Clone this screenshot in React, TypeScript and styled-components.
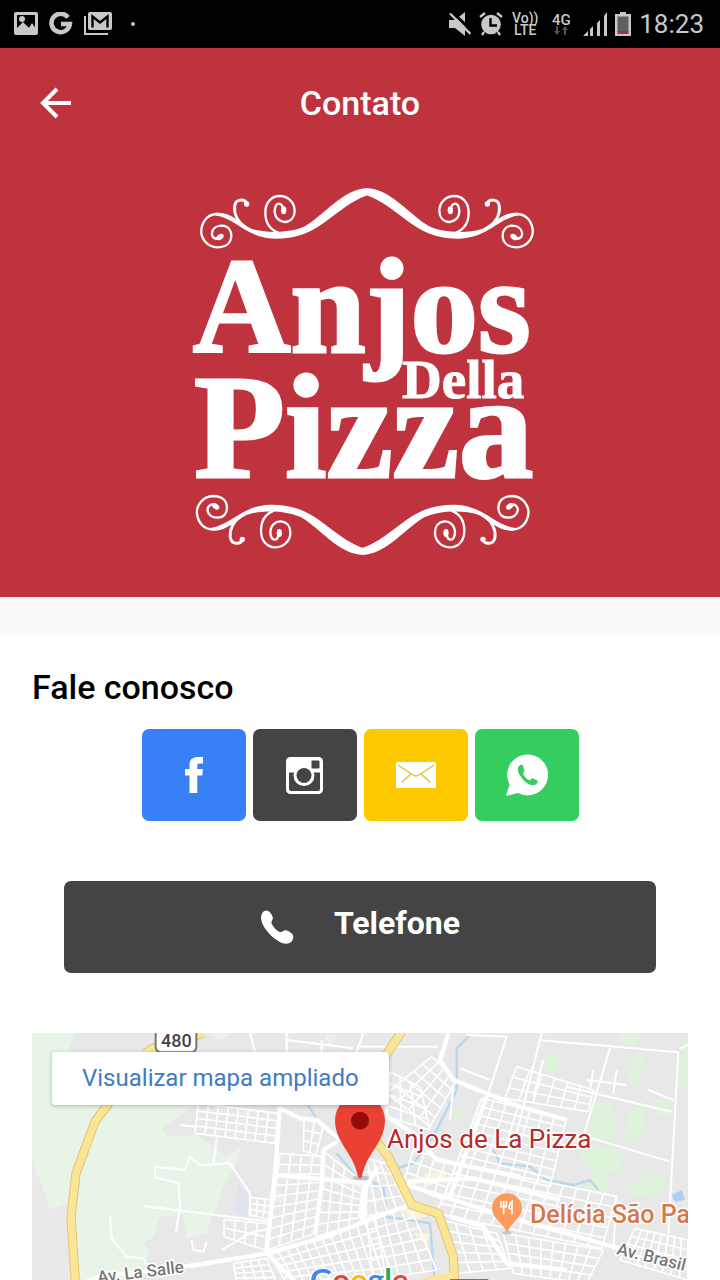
import React from "react";
import styled, { createGlobalStyle } from "styled-components";

const GlobalStyle = createGlobalStyle`
  * { box-sizing: border-box; }
  html, body, #root { margin: 0; height: 100%; }
  body { background: #fff; font-family: Roboto, "Liberation Sans", sans-serif; }
`;

const RED = "#bf333e";

const Page = styled.div`
  min-height: 100vh;
  display: flex;
  flex-direction: column;
`;

const StatusBar = styled.div`
  height: 48px;
  padding: 0 16px 0 14px;
  display: flex;
  align-items: center;
  justify-content: space-between;
  background: #000;
  color: #c8c8c8;
`;

const StatusGroup = styled.div<{ $gap: number }>`
  display: flex;
  align-items: center;
  gap: ${(p) => p.$gap}px;
  svg { display: block; }
`;

const StackedText = styled.span<{ $size: number }>`
  display: flex;
  flex-direction: column;
  align-items: center;
  width: 28px;
  font-size: ${(p) => p.$size}px;
  line-height: 12px;
  font-weight: 500;
`;

const Clock = styled.time`
  font-size: 26px;
  line-height: 32px;
`;

const Hero = styled.header`
  background: ${RED};
  color: #fff;
`;

const TopBar = styled.div`
  height: 110px;
  padding: 0 32px;
  display: grid;
  grid-template-columns: 48px 1fr 48px;
  align-items: center;
`;

const BackButton = styled.button`
  width: 48px;
  height: 48px;
  padding: 0;
  border: 0;
  background: none;
  color: inherit;
  display: grid;
  place-items: center;
`;

const Title = styled.h1`
  margin: 0;
  text-align: center;
  font-size: 34px;
  line-height: 40px;
  font-weight: 500;
`;

const LogoArea = styled.div`
  padding: 22px 0 37px;
  display: flex;
  justify-content: center;
  svg { display: block; }
`;

const Spacer = styled.div`
  height: 38px;
  background: #fafafa;
`;

const Content = styled.main`
  flex: 1;
  padding: 32px 32px 0;
  display: flex;
  flex-direction: column;
`;

const SectionTitle = styled.h2`
  margin: 0 0 22px;
  font-size: 34px;
  line-height: 40px;
  font-weight: 500;
  color: #000;
`;

const Socials = styled.nav`
  display: flex;
  justify-content: center;
  gap: 7px;
`;

const SocialLink = styled.a<{ $color: string }>`
  width: 104px;
  height: 92px;
  border-radius: 7px;
  background: ${(p) => p.$color};
  display: grid;
  place-items: center;
`;

const PhoneLink = styled.a`
  margin: 60px 32px;
  height: 92px;
  padding: 0 0 8px;
  border-radius: 7px;
  background: #444;
  color: #fff;
  display: flex;
  align-items: center;
  justify-content: center;
  gap: 40px;
  font-size: 32px;
  line-height: 40px;
  font-weight: 700;
  text-decoration: none;
  svg { margin-top: 8px; }
`;

const MapFrame = styled.section`
  position: relative;
  flex: 1 0 247px;
  overflow: hidden;
  background: #e8e8e8;
`;

const MapDrawing = styled.svg`
  position: absolute;
  inset: 0;
  width: 100%;
  height: 100%;
`;

const MapLink = styled.a`
  position: absolute;
  top: 19px;
  left: 20px;
  padding: 10px 30px 11px;
  border-radius: 4px;
  background: #fff;
  box-shadow: 0 1px 4px rgba(0, 0, 0, 0.25);
  color: #3f7cc0;
  font-size: 24px;
  line-height: 32px;
  text-decoration: none;
`;

/* ---------- status icons ---------- */

const PictureIcon = () => (
  <svg width="24" height="24" viewBox="0 0 24 24">
    <path fill="currentColor" fillRule="evenodd" d="M2 0h20q2 0 2 2v19q0 2-2 2H2q-2 0-2-2V2Q0 0 2 0ZM3 3v13l6-6 6 6 3-4 3 4V3Z" />
    <circle cx="8" cy="7" r="3" fill="currentColor" />
    <path fill="currentColor" d="M3 17l6-6 6 5 3-5 4 6v4H2Z" />
  </svg>
);

const GoogleIcon = () => (
  <svg width="24" height="24" viewBox="0 0 24 24" fill="none" stroke="currentColor" strokeWidth="4.6">
    <path d="M19 5.4A9.2 9.2 0 1 0 20.8 12H12" />
  </svg>
);

const MailStackIcon = () => (
  <svg width="28" height="24" viewBox="0 0 28 24">
    <path d="M1 4v18h23" fill="none" stroke="currentColor" strokeWidth="2" />
    <path fill="currentColor" d="M6 0h20q2 0 2 2v14q0 2-2 2H6q-2 0-2-2V2q0-2 2-2Z" />
    <path d="M8.500 15.500V4.500l7.500 6 7.500-6V15.500" fill="none" stroke="#000" strokeWidth="2.400" />
  </svg>
);

const MuteIcon = () => (
  <svg width="22" height="24" viewBox="0 0 22 24" fill="currentColor">
    <path d="M0 8h6l10-8v24l-10-8H0Z" />
    <path d="M2-1l22 21" stroke="#000" strokeWidth="3" />
    <path d="M1 1.500l20.500 20.500" stroke="currentColor" strokeWidth="2.400" />
  </svg>
);

const AlarmIcon = () => (
  <svg width="24" height="24" viewBox="0 0 24 24">
    <circle cx="12" cy="12.500" r="9.800" fill="currentColor" />
    <path d="M1 5l5-4M23 5l-5-4M5 20l-2 3M19 20l2 3" stroke="currentColor" strokeWidth="2.400" />
    <path d="M11.500 6v7.500H18" fill="none" stroke="#000" strokeWidth="2.400" />
  </svg>
);

const SignalIcon = () => (
  <svg width="24" height="24" viewBox="0 0 24 24" fill="currentColor">
    <path d="M0 24l5-5v5ZM7 17l3-3v10H7ZM14 11l3-3v16h-3ZM21 4l3-4v24h-3Z" />
  </svg>
);

const BatteryIcon = () => (
  <svg width="16" height="24" viewBox="0 0 16 24">
    <path d="M5 0h6v2h5v22H0V2h5Z" fill="currentColor" />
    <path d="M2.500 4.500h11V20h-11Z" fill="#5f5f5f" />
    <path d="M2.500 19h11v3h-11Z" fill="#a8343a" />
  </svg>
);

const DataArrows = () => (
  <svg width="14" height="9" viewBox="0 0 14 9" fill="#555">
    <path d="M2 0h2v5h2L3 9 0 5h2ZM10 9h2V4h2L11 0 8 4h2Z" />
  </svg>
);

/* ---------- logo ---------- */

const FlourishHalf = () => (
  <g>
    <g fill="none" stroke="#fff" strokeLinecap="round">
      <path strokeWidth="7" d="M122 202C104 214 94 198 96 188C98 174 112 167 126 167C144 168 154 180 154 198C153 220 136 232 112 232C81 231 61 204 64 178C68 148 88 131 114 132" />
      <path strokeWidth="9" d="M202 102C194 85 167 86 164 108C161 132 174 156 196 172" />
      <path strokeWidth="7" d="M310 122C308 96 286 92 284 122C284 144 300 157 316 156C334 154 344 140 344 122C344 96 322 78 300 78C272 78 256 100 256 128C256 156 270 178 294 188" />
    </g>
    <g fill="#fff">
      <ellipse cx="120" cy="201" rx="12" ry="8" transform="rotate(-35 120 201)" />
      <circle cx="200" cy="102" r="8" />
      <ellipse cx="311" cy="121" rx="8" ry="12" />
      <path d="M104 129C150 122 177 158 214 176C258 190 330 190 376 168C430 138 490 56 562 55V76C515 92 480 124 430 160C378 198 328 207 282 206C196 202 170 146 104 136Z" />
    </g>
  </g>
);

const Flourish = () => (
  <g>
    <FlourishHalf />
    <g transform="translate(1122 0) scale(-1 1)"><FlourishHalf /></g>
  </g>
);

const LogoWord = styled.text`
  font-family: "Liberation Serif", "Times New Roman", serif;
  font-weight: 700;
  fill: #fff;
  stroke: #fff;
`;

const Logo = () => (
  <svg width="360" height="380" viewBox="180 180 360 380" role="img" aria-label="Anjos Della Pizza">
    <g transform="translate(180 170) scale(0.33333)"><Flourish /></g>
    <LogoWord x="193" y="352" fontSize="135" strokeWidth="3">Anjos</LogoWord>
    <LogoWord x="402" y="398" fontSize="55" strokeWidth="1">Della</LogoWord>
    <LogoWord x="194" y="477" fontSize="149" strokeWidth="3">Pizza</LogoWord>
    <g transform="translate(175.667 573.333) scale(0.33333 -0.33333)"><Flourish /></g>
  </svg>
);

/* ---------- map ---------- */

type Pt = [number, number];

const mix = (a: Pt, b: Pt, t: number): Pt => [a[0] + (b[0] - a[0]) * t, a[1] + (b[1] - a[1]) * t];

/* Street blocks: evenly divided lines across a four-sided district. */
const Blocks = ({ q, cols, rows }: { q: [Pt, Pt, Pt, Pt]; cols: number; rows: number }) => {
  const [a, b, c, d] = q;
  let path = "";
  for (let i = 0; i <= cols; i++) {
    path += `M${mix(a, b, i / cols).join(" ")}L${mix(d, c, i / cols).join(" ")}`;
  }
  for (let i = 0; i <= rows; i++) {
    path += `M${mix(a, d, i / rows).join(" ")}L${mix(b, c, i / rows).join(" ")}`;
  }
  return <path d={path} />;
};

const districts: { q: [Pt, Pt, Pt, Pt]; cols: number; rows: number }[] = [
  { q: [[535, 250], [775, 280], [765, 370], [525, 340]], cols: 8, rows: 4 },
  { q: [[780, 400], [910, 410], [885, 640], [742, 690]], cols: 4, rows: 9 },
  { q: [[690, 532], [758, 540], [750, 600], [688, 585]], cols: 3, rows: 3 },
  { q: [[852, 300], [912, 310], [888, 405], [850, 392]], cols: 2, rows: 3 },
  { q: [[912, 395], [1035, 490], [1020, 610], [888, 650]], cols: 4, rows: 7 },
  { q: [[750, 705], [1060, 595], [1120, 780], [800, 790]], cols: 12, rows: 5 },
  { q: [[640, 730], [740, 715], [770, 790], [650, 790]], cols: 4, rows: 4 },
  { q: [[612, 598], [745, 612], [735, 690], [612, 650]], cols: 4, rows: 2 },
  { q: [[1235, 110], [1310, 180], [1230, 320], [1100, 220]], cols: 4, rows: 5 },
  { q: [[1110, 155], [1200, 200], [1230, 330], [1100, 290]], cols: 3, rows: 4 },
  { q: [[1490, 140], [1720, 210], [1705, 275], [1455, 235]], cols: 6, rows: 3 },
  { q: [[1385, 235], [1640, 295], [1590, 500], [1310, 430]], cols: 7, rows: 8 },
  { q: [[1310, 430], [1790, 530], [1745, 685], [1250, 580]], cols: 12, rows: 5 },
  { q: [[1265, 600], [1430, 640], [1470, 745], [1310, 760]], cols: 4, rows: 5 },
  { q: [[1450, 640], [1750, 690], [1700, 790], [1480, 760]], cols: 8, rows: 4 },
  { q: [[1040, 600], [1170, 560], [1250, 750], [1060, 780]], cols: 5, rows: 6 },
  { q: [[1845, 625], [2004, 660], [2004, 780], [1800, 720]], cols: 8, rows: 4 },
  { q: [[1180, 390], [1310, 430], [1270, 540], [1150, 490]], cols: 4, rows: 3 },
  { q: [[1020, 410], [1100, 430], [1160, 560], [1040, 590]], cols: 4, rows: 4 },
];

const MapArt = () => (
  <MapDrawing viewBox="32 1033 656 247" preserveAspectRatio="xMidYMin slice" aria-hidden="true">
    <g transform="translate(20 1020) scale(0.33333)">
      <rect x="36" y="39" width="1968" height="900" fill="#e8e8e8" />
      <path fill="#ebe9e7" d="M36 430L80 560 140 560 160 790H36Z" />
      <g fill="#e9f4e8">
        <path d="M36 39H165L140 110 400 110 530 250 480 285 425 330 445 350 530 345 620 410 665 375 650 430 610 500 590 560 570 600 560 640 500 655 490 585 420 590 400 650 370 670 390 700 350 790H175L140 550 90 570 70 510 36 420Z" />
        <path d="M915 45h40l-30 40ZM765 515l35 10-10 25-30-5ZM570 39h60l-30 25Z" />
      </g>
      <g fill="#dff2dc">
        <path d="M1580 105l40-5-10 50-40 10ZM1660 115l30-10-10 20-20 5ZM1800 39h60l-5 35-50-5ZM1840 100l40-10-30 100-30-10ZM1560 180l25-5-15 30ZM1990 80l14 0v120l-35 5ZM1910 235l50 5-5 45-50 5ZM1720 250l50-5 20 50-5 60-50 10-30-20ZM1830 260q50-10 45 60l-20 40-40-10ZM1700 370l110 30-10 50-40 10 10 65-70-10 20-70-50-25ZM1870 460l70 10-10 50-80 10-40-20Z" />
        <path d="M1295 260l30 10-20 40ZM1140 300l40-15 20 20-40 15Z" />
      </g>
      <path fill="#fcf4d8" d="M1210 465l70-15-5 30-60 20ZM1150 570l60-10 10 30-50 10ZM1180 640l50 0-10 35Z" />
      <path fill="#dfe5ea" d="M655 490L685 525 685 590 640 580Z" />
      <path fill="#a9d1f5" d="M1955 525l30-15 10 30-30 5Z" />
      <g fill="none" stroke="#b5d8ee" strokeWidth="7">
        <path d="M860 250L900 310 960 370M950 400L1010 470 1090 500 1100 590 1230 610 1245 790" />
        <path d="M1350 45L1310 85 1310 210 1240 350 1180 430 1130 445M1420 390L1440 430 1530 440 1580 480 1660 495 1710 480 1735 510" />
      </g>
      <g fill="none" stroke="#fff" strokeWidth="5" strokeLinejoin="round">
        {districts.map((d, i) => <Blocks key={i} {...d} />)}
      </g>
      <g fill="none" stroke="#fff" strokeWidth="6" strokeLinejoin="round">
        <path d="M370 558L750 605M405 475V440L495 450 510 410 540 435 630 430 690 520V590M405 472L475 490 480 560 468 635M580 430L590 355M480 315L530 320M270 590L275 655 320 710 370 715 385 740M515 660L520 690 550 695 560 665M605 690L690 640 750 625M690 39L705 95M800 60L1000 85M800 39V95M905 60V95M1020 80L1255 80M1010 95L1030 40" />
        <path d="M1340 45L1460 50 1400 235M1565 39L1490 340M1555 60L1975 97 1945 640M1770 85L1690 350M1980 85L2004 75M1640 200L1955 275M1700 350L1950 425M1790 525L1780 690M1320 145L1410 180M1300 200L1290 300M1570 120L1540 230M1720 150L1710 210M1790 150L1780 220M1700 180L1820 195M1885 210L1960 240" />
      </g>
      <g fill="none" stroke="#fff" strokeWidth="13" strokeLinejoin="round">
        <path d="M185 790L240 770 530 735 740 700 920 650 1060 595 1180 550M780 260L765 460 740 700M780 265L840 295 890 300 960 360 910 390 905 500 885 640M765 465L1050 490M740 700L830 790M1040 490L1030 600" />
        <path d="M1285 40L1260 120 1300 180 1500 260 1640 300M1400 230L1290 530M1160 485L1360 475 1620 540M1160 495L1460 590 1780 680 1850 700M1290 590L1390 620 1460 730 1640 750M1100 290L1180 340 1250 420 1500 470M1075 440L1030 510 1020 590" />
      </g>
      <g fill="none" strokeLinejoin="round">
        <path stroke="#dfc675" strokeWidth="28" d="M270 245L225 305 168 460 153 590 167 800M375 100L400 85 550 40M1145 35L1095 110M1070 365L1105 410 1175 555 1255 580 1300 710 1305 800" />
        <path stroke="#fbe697" strokeWidth="22" d="M270 245L225 305 168 460 153 590 167 800M375 100L400 85 550 40M1145 35L1095 110M1070 365L1105 410 1175 555 1255 580 1300 710 1305 800M1210 785L1310 765" />
      </g>
      <path fill="#fff" stroke="#777" strokeWidth="6" d="M407 20V80Q407 97 428 97H508Q529 97 529 80V20Z" />
      <path d="M1290 778h115v30h-115Z" fill="#555" />
      <ellipse cx="1022" cy="474" rx="25" ry="7" fill="#b9c3c9" />
      <path fill="#e94235" d="M945 300A75 75 0 0 1 1095 300C1095 370 1040 395 1026 470Q1020 480 1014 470C1000 395 945 370 945 300Z" />
      <circle cx="1020" cy="302" r="27" fill="#960a0a" />
      <ellipse cx="1461" cy="638" rx="14" ry="6" fill="#c9c9c9" />
      <path fill="#fc9a5e" d="M1416 565A45 45 0 0 1 1506 565C1506 595 1475 605 1461 638C1447 605 1416 595 1416 565Z" />
      <path fill="none" stroke="#fff" strokeWidth="5" d="M1443 543V560H1459V543M1451 543V583M1476 583V544Q1466 552 1468 566H1476" />
    </g>
    <g fontFamily='Roboto, "Liberation Sans", sans-serif' stroke="#fff" strokeWidth="3" strokeLinejoin="round" paintOrder="stroke">
      <text x="161" y="1047" fontSize="18" fontWeight="500" fill="#444">480</text>
      <text x="387" y="1148" fontSize="26" fill="#b52b2b">Anjos de La Pizza</text>
      <text x="530" y="1223" fontSize="25" fontWeight="500" fill="#d27a4e">Delícia São Paulo</text>
      <text x="616" y="1254" fontSize="17" fontWeight="500" fill="#777" transform="rotate(14 616 1254)">Av. Brasil</text>
      <text x="98" y="1283" fontSize="17" fontWeight="500" fill="#777" transform="rotate(-7 98 1283)">Av. La Salle</text>
      <text x="310" y="1291" fontSize="31" fontWeight="700" fontFamily='Lato, sans-serif'>
        <tspan fill="#4285f4">G</tspan><tspan fill="#ea4335">o</tspan><tspan fill="#fbbc05">o</tspan>
        <tspan fill="#4285f4">g</tspan><tspan fill="#34a853">l</tspan><tspan fill="#ea4335">e</tspan>
      </text>
    </g>
  </MapDrawing>
);

/* ---------- contact icons ---------- */

const FacebookIcon = () => (
  <svg width="38" height="38" viewBox="0 0 38 38" fill="#fff">
    <path d="M14.500 37V19.500H10V13h4.500V9.500C14.500 3.500 17.500 1 23 1h5v6.500h-3.500c-1.700 0-2.200.8-2.200 2.300V13H28l-.7 6.500h-5V37Z" />
  </svg>
);

const InstagramIcon = () => (
  <svg width="37" height="37" viewBox="0 0 37 37">
    <rect width="37" height="37" rx="4.500" fill="#fff" />
    <path d="M3 15.500h31V32q0 2-2 2H5q-2 0-2-2Z" fill="#444" />
    <circle cx="18" cy="18.500" r="10.500" fill="#fff" />
    <circle cx="18" cy="18.500" r="7.500" fill="#444" />
    <rect x="25.500" y="3.500" width="8" height="8" rx="1" fill="#444" />
  </svg>
);

const EnvelopeIcon = () => (
  <svg width="40" height="26" viewBox="0 0 40 26">
    <rect width="40" height="26" rx="1.500" fill="#fff" />
    <path d="M2 3L17 13q3 2 6 0L38 3M5.500 20.500L15 12M34.500 20.500L25 12" fill="none" stroke="#e8c02c" strokeWidth="1.500" />
  </svg>
);

const WhatsappIcon = () => (
  <svg width="44" height="44" viewBox="0 0 44 44">
    <path fill="#fff" d="M1 43L4.500 31.500A20.500 20.500 0 1 1 13 40Z" />
    <path fill="#35cc60" d="M15.500 12C12 13.500 12 18 15 22.500C19 29 25 33 29.500 32C32 31 33 29.500 32.500 27.500L27 25L24.500 27.500C21.500 26 19 23.500 18 20.500L19.500 18L18 12.500Q17 11.500 15.500 12Z" />
  </svg>
);

const PhoneIcon = () => (
  <svg width="34" height="34" viewBox="0 0 34 34" fill="#fff">
    <path d="M2 3.500C4-.5 8.500-.5 10.500 3C12.500 6 13.500 7.500 12.500 9.500C11.500 11 11 12.500 12 14.500C14 18 16 20 19.500 22C21.500 22.500 22.500 21 24.500 20.500C26 20 28 21 30.500 22.500C34 24.500 34 28 32 31C29.500 34.500 24 34.500 19 31.500C12 27.500 5.500 20.500 2.500 14C1 10 .5 6.500 2 3.500Z" />
  </svg>
);

const socials = [
  { label: "Facebook", color: "#3880f5", icon: <FacebookIcon /> },
  { label: "Instagram", color: "#444444", icon: <InstagramIcon /> },
  { label: "E-mail", color: "#fdca02", icon: <EnvelopeIcon /> },
  { label: "WhatsApp", color: "#35cc60", icon: <WhatsappIcon /> },
];

export default function App() {
  return (
    <Page>
      <GlobalStyle />
      <StatusBar>
        <StatusGroup $gap={11}>
          <PictureIcon />
          <GoogleIcon />
          <MailStackIcon />
          <svg width="20" height="4" viewBox="0 0 20 4"><circle cx="10" cy="2" r="2" fill="currentColor" /></svg>
        </StatusGroup>
        <StatusGroup $gap={8}>
          <MuteIcon />
          <AlarmIcon />
          <StackedText $size={14}><span>Vo))</span><span>LTE</span></StackedText>
          <StackedText $size={15}><span>4G</span><DataArrows /></StackedText>
          <SignalIcon />
          <BatteryIcon />
          <Clock>18:23</Clock>
        </StatusGroup>
      </StatusBar>
      <Hero>
        <TopBar>
          <BackButton type="button" aria-label="Voltar">
            <svg width="32" height="32" viewBox="0 0 32 32" fill="none" stroke="currentColor" strokeWidth="4">
              <path d="M31 16H4M17 2L3 16l14 14" />
            </svg>
          </BackButton>
          <Title>Contato</Title>
        </TopBar>
        <LogoArea><Logo /></LogoArea>
      </Hero>
      <Spacer />
      <Content>
        <SectionTitle>Fale conosco</SectionTitle>
        <Socials aria-label="Redes e contato">
          {socials.map((s) => (
            <SocialLink key={s.label} href="#" aria-label={s.label} $color={s.color}>{s.icon}</SocialLink>
          ))}
        </Socials>
        <PhoneLink href="tel:"><PhoneIcon />Telefone</PhoneLink>
        <MapFrame aria-label="Mapa">
          <MapArt />
          <MapLink href="#">Visualizar mapa ampliado</MapLink>
        </MapFrame>
      </Content>
    </Page>
  );
}
